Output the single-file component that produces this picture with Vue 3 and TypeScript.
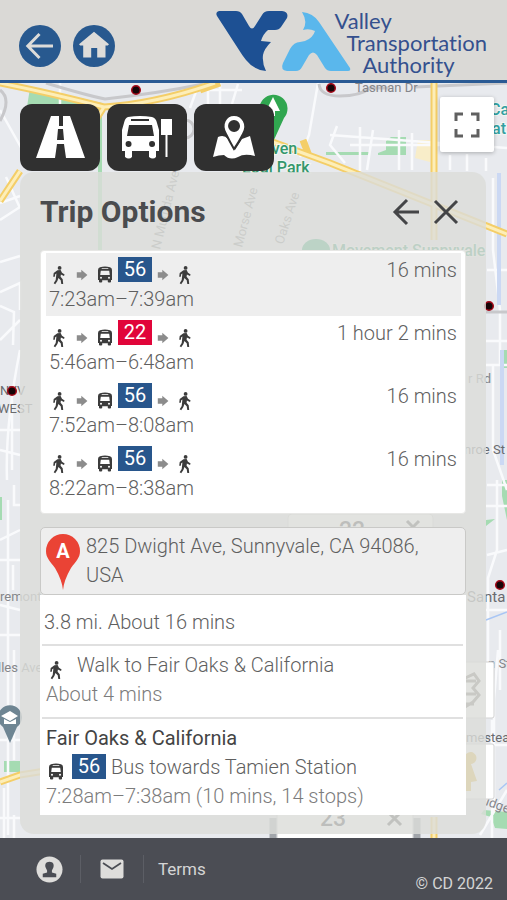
<script setup lang="ts">
interface Route {
  line: string
  colour: 'blue' | 'red'
  duration: string
  times: string
}

const routes: Route[] = [
  { line: '56', colour: 'blue', duration: '16 mins', times: '7:23am–7:39am' },
  { line: '22', colour: 'red', duration: '1 hour 2 mins', times: '5:46am–6:48am' },
  { line: '56', colour: 'blue', duration: '16 mins', times: '7:52am–8:08am' },
  { line: '56', colour: 'blue', duration: '16 mins', times: '8:22am–8:38am' },
]

const stops = [
  [136, 90], [331, 88], [489, 306], [12, 391], [500, 585],
]
</script>

<template>
  <div class="app">
    <svg class="symbols" aria-hidden="true">
      <symbol id="walk" viewBox="0 0 14 20">
        <circle cx="7.6" cy="2.9" r="1.9" />
        <path d="M5.4 5.2 8.6 5 10 7.8 12.6 9.5 12 10.9 8.9 9.4 8.6 11.8 10.7 14.3 11.2 19H9.3L8.7 15.2 6.4 13 5.4 16 3.2 19.2 1.7 18.2 3.7 15 4.4 8.4 3.2 9.2 2.8 11.8H1.2L1.7 8Z" />
      </symbol>
      <symbol id="arrow" viewBox="0 0 12 20">
        <path d="M.8 7.2H5.3V4.8L11.4 10 5.3 15.3V12.8H.8Z" />
      </symbol>
      <symbol id="bus" viewBox="0 0 16 20">
        <path fill-rule="evenodd" d="M3 2.3Q8 .9 13 2.3 15 3 15 5V15H14V17Q12.4 18.2 10.8 17V15.2H5.2V17Q3.6 18.2 2 17V15H1V5Q1 3 3 2.3ZM4.7 3.2V4.1H11.3V3.2ZM3.8 5.8 3.2 10H12.8L12.2 5.8ZM4 11.8A1 1 0 1 0 4.01 13.8 1 1 0 1 0 4 11.8ZM12 11.8A1 1 0 1 0 12.01 13.8 1 1 0 1 0 12 11.8Z" />
      </symbol>
    </svg>

    <header class="header">
      <nav class="nav" aria-label="Main">
        <button class="round" type="button" aria-label="Back">
          <svg viewBox="0 0 42 42"><path d="M34 21H9.5M20.5 9 8.8 21 20.5 33" fill="none" stroke="#dddcd9" stroke-width="3" /></svg>
        </button>
        <button class="round" type="button" aria-label="Home">
          <svg viewBox="0 0 42 42"><path d="M21 6.8 36 19.2 34.8 20.5H32.5V32.5H24.2V23H18.2V32.5H10.2V20.5H7.2L6 19.2Z" fill="#dddcd9" /></svg>
        </button>
      </nav>
      <a class="brand" href="#">
        <svg class="logo" viewBox="0 0 136 62" aria-hidden="true">
          <path fill="#1d5093" d="M3 1H20Q24 1 26 4L33 16Q36 21 39 16L46 5Q48 1 53 1H66Q73 2 71 8L65 17Q63 20 59 20H52Q47 24 45 31L55 32Q48 39 47 45Q46 53 50 61Q38 60 30 50Q26 45 23 40L1 6Q-1 2 3 1Z" />
          <path fill="#5ab7ec" d="M86 2Q97 3 103 12L134 58Q135 61 132 61H115Q111 61 109 58L101 45Q97 40 93 45L86 57Q84 61 80 61H71Q64 60 67 53L74 39Q78 32 84 32L89 31Q97 28 99 21Q93 18 87 20Q92 12 86 2Z" />
        </svg>
        <span class="brand-text">
          <span>Valley</span>
          <span class="second">Transportation</span>
          <span class="third">Authority</span>
        </span>
      </a>
    </header>

    <main class="main">
      <svg class="map" viewBox="0 83 507 755" preserveAspectRatio="xMidYMin slice" aria-hidden="true">
        <rect y="83" width="507" height="755" fill="#e8eaee" />
        <g fill="#a5dbb2">
          <path d="M30 88 62 94 102 103V250H98V165L26 113ZM386 141 391 137H406V155H378V153L386 150ZM326 152H370V155H326ZM0 497V520H2V497ZM4 761H20V772H4ZM484 810 507 812V829L495 828 491 817 481 814ZM503 350H507V368H503ZM502 480H507V520L502 496ZM486 520 495 519 486 526Z" />
        </g>
        <path d="M418 140H430V162L415 158Z" fill="#f8edc9" />
        <g fill="none" stroke="#f9fafc" stroke-width="2.5">
          <path d="M0 110 28 160M60 83V104M198 86 190 108M208 83V105M220 83V108M238 84 232 104M196 90H242M318 83 309 135 300 157M330 135 507 148M337 126 330 145 345 163M360 127V171M373 130 367 170M399 130V170M412 133V170M350 145H440M450 155V170M467 154V171M486 158V171M0 203 20 196M0 220 20 207M0 262 20 256M6 177 20 208M0 292 20 283V310M0 306 14 312 13 345M0 340 20 320M7 480Q5 425 20 350M0 430H20M12 400V470M0 450 20 455M14 485V505H20M8 500V835M0 540 20 530M0 560H20M13 565V590M0 605 20 610M0 635H20M14 650V760M0 740H20M4 788V838M0 818H20M14 815V838M487 270H507M493 178V250L500 310V365H486M486 341H507M486 365H507M493 365V450L507 490M487 485H507M486 506H507M497 480V550L488 578V690M487 555 507 550M486 610H507M500 630V690M492 720V838M486 745H507M498 650 494 700V810M480 835 507 790" />
        </g>
        <path d="M499 173V305M502 350V465" stroke="#cbd8f3" stroke-width="4" />
        <g fill="none" stroke="#a9c6f4" stroke-width="1.5"><path d="M486 620 507 612M499 790 507 783" /></g>
        <g fill="none" stroke="#c8c8cb" stroke-width="3">
          <path d="M0 90Q12 99 0 121M46 83Q82 94 105 99 160 93 203 84M319 84Q320 96 340 96T370 88L390 88M415 87 507 83M486 312H507" />
          <circle cx="185" cy="129" r="9" />
        </g>
        <g fill="none" stroke="#f4ce68" stroke-width="7">
          <path d="M0 83Q50 93 104 107 155 104 215 83M104 107 92 126M200 90 220 83M20 171 0 201M270 141 330 163 507 234M434 83V240M0 782 20 775 45 771M303 140 309 156M434 817V838" />
        </g>
        <g fill="none" stroke="#fdeeb8" stroke-width="3">
          <path d="M0 83Q50 93 104 107 155 104 215 83M104 107 92 126M20 171 0 201M270 141 330 163 507 234M434 83V240M0 782 20 775 45 771M434 817V838" />
        </g>
        <g font-family="Roboto, sans-serif" fill="#85868a" font-size="13" font-weight="400">
          <text x="355" y="92">Tasman Dr</text>
          <text x="160" y="250" transform="rotate(-76 160 250)">N Murilda Ave</text>
          <text x="242" y="248" transform="rotate(-75 242 248)">Morse Ave</text>
          <text x="283" y="245" transform="rotate(-72 283 245)">Oaks Ave</text>
          <text x="468" y="383">r Rd</text>
          <text x="464" y="454" fill="#696a6e">nroe St</text>
          <text x="0" y="395" fill="#696a6e">NYV</text>
          <text x="-2" y="413" fill="#696a6e">WEST</text>
          <text x="0" y="601">remont</text>
          <text x="-2" y="672">lles Ave</text>
          <text x="467" y="602" fill="#696a6e" font-size="15">Santa</text>
          <text x="488" y="668">n St</text>
          <text x="466" y="742" fill="#696a6e">mestead</text>
          <text x="485" y="805" transform="rotate(20 485 805)">idge</text>
        </g>
        <g font-family="Roboto, sans-serif" fill="#34976c" font-size="16" font-weight="500" stroke="#f2f6f2" stroke-width="2" paint-order="stroke">
          <text x="252" y="154">Haven</text><text x="242" y="173">Lodi Park</text>
          <text x="332" y="256">Movement Sunnyvale</text>
          <text x="490" y="115" fill="#31a0a2">Cal</text><text x="492" y="134" fill="#31a0a2">at</text>
        </g>
        <path d="M273 142 264 119A14 14 0 1 1 284 118Z" fill="#30a650" />
        <path d="M273 97 280 111H275V116H271V111H266Z" fill="#fff" />
        <path d="M302 250A14 11 0 0 1 330 250Z" fill="#30a675" />
        <path d="M10 743 3 727A12 12 0 1 1 17 727Z" fill="#6e8593" />
        <path d="M1 716 10 711 18 716 10 721ZM4 719 10 722 16 719V724H4Z" fill="#fff" />
        <g fill="#fff" stroke="#d2d2d2"><rect x="288" y="514" width="145" height="100" rx="4" /><rect x="277" y="790" width="136" height="70" rx="3" /><rect x="440" y="662" width="54" height="56" rx="2" /><rect x="440" y="744" width="54" height="55" rx="2" /></g>
        <path d="M273 818V838M417 818V838" stroke="#a2a6ab" stroke-width="7" />
        <g fill="#39393b" font-family="Roboto, sans-serif" font-size="23" font-weight="500"><text x="339" y="538">22</text><text x="320" y="826">23</text></g>
        <path d="M407 521 419 533M419 521 407 533M388 812 401 825M401 812 388 825" stroke="#4b4b4b" stroke-width="3" />
        <path d="M461 680 474 674 479 681 473 688 479 695 473 702 465 707M461 681H476M461 694H476M461 704H474" fill="none" stroke="#76736d" stroke-width="3" />
        <path d="M466 754A6 6 0 1 1 471 764L477 781 471 782V791H464V765Z" fill="#e4b83f" />
        <g fill="#160507" stroke="#a70b1b" stroke-width="1.5"><circle v-for="stop in stops" :key="stop.join()" :cx="stop[0]" :cy="stop[1]" r="4.3" /></g>
      </svg>

      <div class="tools">
        <button type="button" aria-label="Traffic">
          <svg viewBox="0 0 80 67"><path fill="#fff" fill-rule="evenodd" d="M31 12H50L65 54H46L44 40H37L35 54H16ZM39 12V22H43V12ZM38 25 37 36H44L43 25Z" /></svg>
        </button>
        <button type="button" aria-label="Bus stops">
          <svg viewBox="0 0 80 67">
            <path fill="#fff" fill-rule="evenodd" d="M21 13Q33 11 45 13 49 14 50 19L52 26V47H49V53Q46 56 42 53V47H25V53Q22 56 18 53V47H15V26L17 19Q18 14 21 13ZM24 15V17H42V15ZM22 21 20 32H47L45 21ZM21.500 37A3 3 0 1 0 21.600 43 3 3 0 1 0 21.500 37ZM45 37A3 3 0 1 0 45.100 43 3 3 0 1 0 45 37Z" />
            <path d="M54 15H65V31H60.500V53H58.500V31H54Z" fill="#fff" />
          </svg>
        </button>
        <button type="button" aria-label="Places">
          <svg viewBox="0 0 80 67">
            <path fill="#fff" d="M24 33Q30 30 34 35L41 46 48 35 56 32 61 52Q50 49 44 53 36 57 30 51 25 51 19 53Z" />
            <path fill="#fff" fill-rule="evenodd" stroke="#303030" stroke-width="2" d="M40 45Q36 38 32 30C26 20 32 11 40 11S55 20 49 30Q45 38 40 45ZM40 17A5 5 0 1 0 40.1 27 5 5 0 1 0 40 17Z" />
          </svg>
        </button>
      </div>
      <button class="fullscreen" type="button" aria-label="Full screen">
        <svg viewBox="0 0 26 26"><path d="M2 9V2H9M17 2H24V9M24 17V24H17M9 24H2V17" fill="none" stroke="#606060" stroke-width="3" /></svg>
      </button>

      <section class="panel">
        <div class="panel-head">
          <h1>Trip Options</h1>
          <button type="button" aria-label="Previous">
            <svg viewBox="0 0 28 28"><path d="M27 14H3M15 2 3 14 15 26" /></svg>
          </button>
          <button type="button" aria-label="Close">
            <svg viewBox="0 0 28 28"><path d="M3 3 25 25M25 3 3 25" /></svg>
          </button>
        </div>

        <ul class="routes">
          <li v-for="(route, index) in routes" :key="index">
            <button class="route" :class="{ selected: index === 0 }" type="button">
              <span class="steps">
                <svg class="walk first"><use href="#walk" /></svg>
                <svg class="arrow"><use href="#arrow" /></svg>
                <svg class="bus"><use href="#bus" /></svg>
                <span class="badge" :class="route.colour">{{ route.line }}</span>
                <svg class="arrow"><use href="#arrow" /></svg>
                <svg class="walk"><use href="#walk" /></svg>
                <span class="duration">{{ route.duration }}</span>
              </span>
              <span class="times">{{ route.times }}</span>
            </button>
          </li>
        </ul>

        <div class="address">
          <svg class="pin" viewBox="0 0 34 56" aria-hidden="true">
            <path d="M17 56Q16 46 9 34C4 27 0 24 0 17A17 17 0 0 1 34 17C34 24 30 27 25 34Q18 46 17 56Z" fill="#ea4335" />
            <text x="17" y="24" text-anchor="middle" fill="#fff" font-size="20" font-weight="700">A</text>
          </svg>
          <span>825 Dwight Ave, Sunnyvale, CA 94086, USA</span>
        </div>

        <div class="details">
          <p class="summary">3.8 mi. About 16 mins</p>
          <div class="leg">
            <p class="leg-line"><svg class="walk first"><use href="#walk" /></svg>Walk to Fair Oaks &amp; California</p>
            <p class="soft">About 4 mins</p>
          </div>
          <div class="leg">
            <p class="place">Fair Oaks &amp; California</p>
            <p class="leg-line bus-line"><svg class="bus"><use href="#bus" /></svg><span class="badge blue">56</span>Bus towards Tamien Station</p>
            <p class="soft">7:28am–7:38am (10 mins, 14 stops)</p>
          </div>
        </div>
      </section>
    </main>

    <footer class="footer">
      <a href="#" aria-label="Account">
        <svg class="account" viewBox="0 0 28 28"><circle cx="14" cy="14" r="13.5" fill="#dedddb" /><path d="M14 6C18 6 19 9 18 12L16.5 15V17L21 18.5V22H7V18.5L11.5 17V15L10 12C9 9 10 6 14 6Z" fill="#4b4d54" /></svg>
      </a>
      <a class="split" href="#" aria-label="Mail">
        <svg class="mail" viewBox="0 0 24 20"><rect x=".5" y=".5" width="23" height="19" rx="2" fill="#dedddb" /><path d="M3 4 12 10 21 4" fill="none" stroke="#4b4d54" stroke-width="1.8" /></svg>
      </a>
      <a class="split" href="#">Terms</a>
      <small>© CD 2022</small>
    </footer>
  </div>
</template>

<style>
body { margin: 0; }
</style>

<style scoped>
.app { min-height: 100vh; display: flex; flex-direction: column; font-family: Roboto, "Liberation Sans", sans-serif; font-size: 20px; font-weight: 300; line-height: 29px; color: #5f5f5f; }
.symbols { position: absolute; width: 0; height: 0; }
button { font: inherit; color: inherit; border: 0; padding: 0; background: none; cursor: pointer; }
a { color: inherit; text-decoration: none; }
svg { display: block; flex: none; }
p, h1, ul { margin: 0; padding: 0; }

.header { box-sizing: border-box; height: 83px; flex: none; display: flex; justify-content: space-between; align-items: flex-start; padding: 10px 20px 0 19px; background: #dad9d6; border-bottom: 3px solid #2a5a94; }
.nav { display: flex; gap: 12px; padding-top: 15px; }
.round { width: 42px; height: 42px; border-radius: 50%; background: #28598f; }
.brand { display: flex; color: #34508e; }
.logo { width: 136px; height: 62px; margin-right: -18px; }
.brand-text { display: flex; flex-direction: column; font: 400 22px/22px Lato, sans-serif; font-variant-ligatures: none; }
.second { padding-left: 12px; }
.third { padding-left: 28px; }

.main { position: relative; flex: 1; display: flex; flex-direction: column; padding: 21px 21px 4px 20px; overflow: hidden; }
.map { position: absolute; inset: 0; width: 100%; height: 100%; }
.tools { position: relative; display: flex; gap: 7px; }
.tools button { width: 80px; height: 67px; border-radius: 12px; background: #303030; }
.fullscreen { position: absolute; top: 14px; right: 13px; width: 54px; height: 55px; display: grid; place-items: center; background: #fff; border-radius: 2px; box-shadow: 0 1px 4px #0004; }
.fullscreen svg { width: 26px; height: 26px; }

.panel { position: relative; padding: 0 20px 19px; background: #dcddd9d0; border-radius: 14px; margin-top: 1px; }
.panel-head { display: flex; align-items: center; gap: 12px; height: 78px; padding: 2px 6px 0 0; box-sizing: border-box; }
h1 { flex: 1; font-size: 30px; font-weight: 700; line-height: 40px; color: #4a4c4f; }
.panel-head svg { width: 28px; height: 28px; fill: none; stroke: #444547; stroke-width: 3; }

.routes { list-style: none; background: #fff; border: 1px solid #e7e7e5; border-radius: 4px; padding: 2px 4px 8px 5px; }
.route { display: block; width: 100%; height: 63px; padding: 3px 4px 2px 3px; text-align: left; }
.selected { background: #eee; }
.steps { display: flex; align-items: flex-end; gap: 5px; height: 29px; padding-left: 3px; }
.times { display: block; }
.duration { margin-left: auto; }
.walk, .bus { fill: #3c3c3c; height: 20px; }
.walk { width: 14px; }
.first { margin-right: 5px; }
.bus { width: 16px; }
.arrow { width: 12px; height: 20px; fill: #8c8c8c; margin-right: 4px; }
.badge { flex: none; width: 34px; height: 25px; line-height: 25px; text-align: center; color: #fff; align-self: flex-start; margin-top: 1px; font-weight: 400; }
.blue { background: #28568c; }
.red { background: #e1053a; }

.address { display: flex; gap: 6px; margin-top: 13px; padding: 4px 24px 4px 5px; background: #eee; border: 1px solid #c9c9c7; border-radius: 5px; }
.pin { width: 34px; height: 56px; margin-top: 2px; }
.details { background: #fff; padding: 0 3px 0 2px; }
.summary { padding: 13px 2px 7px; }
.leg { border-top: 2px solid #e0e0e0; padding: 5px 4px 8px; }
.leg:last-child { padding-bottom: 4px; }
.leg-line { display: flex; align-items: flex-end; padding-left: 3px; gap: 9px; }
.bus-line { padding-left: 2px; gap: 5px; }
.bus-line .bus { margin-right: 3px; }
.soft { color: #7c7c7c; }
.place { color: #444; font-weight: 400; }

.footer { position: relative; flex: none; display: flex; align-items: center; height: 62px; padding: 0 14px 0 36px; box-sizing: border-box; background: #4b4d54; color: #d5d5d5; font-size: 17px; font-weight: 400; }
.account { width: 27px; height: 27px; }
.mail { width: 24px; height: 20px; }
.split { display: flex; align-items: center; height: 28px; border-left: 1px solid #5c5e65; margin-left: 17px; padding-left: 19px; }
.split + .split { padding-left: 14px; margin-left: 19px; }
small { margin-left: auto; align-self: flex-end; font-size: 16px; line-height: 32px; }
</style>
